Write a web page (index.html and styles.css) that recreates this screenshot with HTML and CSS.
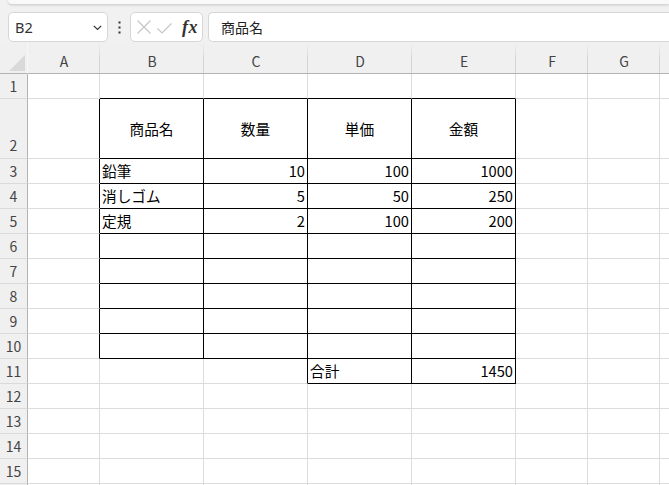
FILE: index.html
```html
<!DOCTYPE html>
<html lang="ja">
<head>
<meta charset="utf-8">
<title>Sheet</title>
<link rel="stylesheet" href="styles.css">
</head>
<body>
<div class="bar">
  <div class="ribbon"></div>
  <div class="fbar">
    <div class="box namebox">
      <span class="ref">B2</span>
      <svg class="chev" width="9" height="6" viewBox="0 0 9 6"><path d="M0.8 0.8 L4.5 4.5 L8.2 0.8" fill="none" stroke="#333" stroke-width="1.2"/></svg>
    </div>
    <div class="dots">
      <svg width="3" height="13" viewBox="0 0 3 13"><rect x="0.5" y="0.5" width="2" height="2" fill="#333"/><rect x="0.5" y="5.5" width="2" height="2" fill="#333"/><rect x="0.5" y="10.5" width="2" height="2" fill="#333"/></svg>
    </div>
    <div class="box fxbox">
      <svg class="ico" width="14" height="14" viewBox="0 0 14 14"><path d="M0.5 0.5 L13.5 13.5 M13.5 0.5 L0.5 13.5" stroke="#c4c4c4" stroke-width="1.1" fill="none"/></svg>
      <svg class="ico chk" width="15" height="11" viewBox="0 0 15 11"><path d="M0.5 5.5 L5 10 L14.5 0.5" stroke="#c4c4c4" stroke-width="1.1" fill="none"/></svg>
      <span class="fx">fx</span>
    </div>
    <div class="box formula">商品名</div>
  </div>
</div>

<div class="sheet">
  <div class="corner"><div class="tri"></div></div>
  <div class="ch">A</div><div class="ch">B</div><div class="ch">C</div><div class="ch">D</div><div class="ch">E</div><div class="ch">F</div><div class="ch">G</div><div class="ch"></div>

  <div class="rh">1</div>
  <div class="c"></div><div class="c kb"></div><div class="c kb"></div><div class="c kb"></div><div class="c kb"></div><div class="c"></div><div class="c"></div><div class="c"></div>

  <div class="rh tall">2</div>
  <div class="c kr"></div><div class="c k m">商品名</div><div class="c k m">数量</div><div class="c k m">単価</div><div class="c k m">金額</div><div class="c"></div><div class="c"></div><div class="c"></div>

  <div class="rh">3</div>
  <div class="c kr"></div><div class="c k">鉛筆</div><div class="c k r">10</div><div class="c k r">100</div><div class="c k r">1000</div><div class="c"></div><div class="c"></div><div class="c"></div>

  <div class="rh">4</div>
  <div class="c kr"></div><div class="c k">消しゴム</div><div class="c k r">5</div><div class="c k r">50</div><div class="c k r">250</div><div class="c"></div><div class="c"></div><div class="c"></div>

  <div class="rh">5</div>
  <div class="c kr"></div><div class="c k">定規</div><div class="c k r">2</div><div class="c k r">100</div><div class="c k r">200</div><div class="c"></div><div class="c"></div><div class="c"></div>

  <div class="rh">6</div>
  <div class="c kr"></div><div class="c k"></div><div class="c k"></div><div class="c k"></div><div class="c k"></div><div class="c"></div><div class="c"></div><div class="c"></div>

  <div class="rh">7</div>
  <div class="c kr"></div><div class="c k"></div><div class="c k"></div><div class="c k"></div><div class="c k"></div><div class="c"></div><div class="c"></div><div class="c"></div>

  <div class="rh">8</div>
  <div class="c kr"></div><div class="c k"></div><div class="c k"></div><div class="c k"></div><div class="c k"></div><div class="c"></div><div class="c"></div><div class="c"></div>

  <div class="rh">9</div>
  <div class="c kr"></div><div class="c k"></div><div class="c k"></div><div class="c k"></div><div class="c k"></div><div class="c"></div><div class="c"></div><div class="c"></div>

  <div class="rh">10</div>
  <div class="c kr"></div><div class="c k"></div><div class="c k"></div><div class="c k"></div><div class="c k"></div><div class="c"></div><div class="c"></div><div class="c"></div>

  <div class="rh">11</div>
  <div class="c"></div><div class="c"></div><div class="c kr"></div><div class="c k">合計</div><div class="c k r">1450</div><div class="c"></div><div class="c"></div><div class="c"></div>

  <div class="rh">12</div>
  <div class="c"></div><div class="c"></div><div class="c"></div><div class="c"></div><div class="c"></div><div class="c"></div><div class="c"></div><div class="c"></div>

  <div class="rh">13</div>
  <div class="c"></div><div class="c"></div><div class="c"></div><div class="c"></div><div class="c"></div><div class="c"></div><div class="c"></div><div class="c"></div>

  <div class="rh">14</div>
  <div class="c"></div><div class="c"></div><div class="c"></div><div class="c"></div><div class="c"></div><div class="c"></div><div class="c"></div><div class="c"></div>

  <div class="rh">15</div>
  <div class="c"></div><div class="c"></div><div class="c"></div><div class="c"></div><div class="c"></div><div class="c"></div><div class="c"></div><div class="c"></div>

  <div class="rh"></div>
  <div class="c"></div><div class="c"></div><div class="c"></div><div class="c"></div><div class="c"></div><div class="c"></div><div class="c"></div><div class="c"></div>
</div>
</body>
</html>
```

FILE: styles.css
```css
html, body {
  margin: 0;
  padding: 0;
}
body {
  width: 669px;
  height: 485px;
  overflow: hidden;
  background: #fff;
  font-family: "Noto Sans CJK JP", "Noto Sans", sans-serif;
}

/* ---- formula bar ---- */
.bar {
  height: 42px;
  background: #f1f1f1;
  overflow: hidden;
}
.ribbon {
  height: 4px;
  margin-left: 8px;
  background: #f9f9f9;
  border-bottom-left-radius: 6px;
  box-shadow: 0 1px 3px rgba(0, 0, 0, 0.18);
}
.fbar {
  display: flex;
  height: 30px;
  margin-top: 8px;
}
.fbar > * {
  flex-shrink: 0;
}
.box {
  box-sizing: border-box;
  background: #fff;
  border: 1px solid #d6d6d6;
  border-radius: 5px;
}
.namebox {
  width: 100px;
  margin-left: 8px;
  display: flex;
  align-items: center;
  justify-content: space-between;
  padding: 0 5px 0 6px;
}
.ref {
  font-family: "Noto Sans", sans-serif;
  font-size: 14.5px;
  color: #333;
  line-height: 20px;
}
.chev {
  margin-top: 1px;
}
.dots {
  width: 22px;
  display: flex;
  align-items: center;
  justify-content: center;
}
.fxbox {
  width: 73px;
  display: flex;
  align-items: center;
  padding-left: 6px;
}
.ico.chk {
  margin-left: 6px;
  margin-top: 2px;
}
.fx {
  margin-left: 10px;
  font-family: "Liberation Serif", serif;
  font-style: italic;
  font-weight: bold;
  font-size: 18px;
  line-height: 20px;
  letter-spacing: 0.5px;
  color: #333;
}
.formula {
  width: 480px;
  margin-left: 5px;
  display: flex;
  align-items: center;
  padding-left: 12px;
  font-size: 14px;
  color: #222;
  border-right: none;
  border-radius: 5px 0 0 5px;
}

/* ---- sheet grid ---- */
.sheet {
  display: grid;
  grid-template-columns: 28px 72px 104px 104px 104px 104px 72px 72px 72px;
  grid-template-rows: 32px 25px 60px repeat(14, 25px);
  width: max-content;
}
.corner,
.ch,
.rh,
.c {
  box-sizing: border-box;
  display: flex;
  align-items: center;
  white-space: nowrap;
  overflow: hidden;
}
.corner {
  position: relative;
  background: #f0f0f0;
  border-bottom: 1px solid #b3b3b3;
  border-right: 1px solid #f7f7f7;
  justify-content: flex-end;
  align-items: flex-end;
  padding: 0 2px 2px 0;
}
.tri {
  width: 16px;
  height: 16px;
  background: #d9d9d9;
  clip-path: polygon(100% 0, 100% 100%, 0 100%);
}
.ch {
  position: relative;
  background: #f0f0f0;
  border-bottom: 1px solid #b3b3b3;
  justify-content: center;
  padding-top: 6px;
  font-size: 14px;
  line-height: 20px;
  color: #444;
}
.ch::after,
.corner::after {
  content: "";
  position: absolute;
  right: 0;
  top: 0;
  bottom: 0;
  width: 1px;
  background: linear-gradient(rgba(212, 212, 212, 0), #d4d4d4 55%);
}
.corner::after {
  right: -1px;
  background: linear-gradient(rgba(180, 180, 180, 0), #b3b3b3 60%);
}
.rh {
  background: #f0f0f0;
  border-right: 1px solid #b3b3b3;
  border-bottom: 1px solid #dadada;
  justify-content: center;
  font-size: 14px;
  line-height: 20px;
  color: #444;
}
.rh.tall {
  align-items: flex-end;
  padding-bottom: 3px;
}
.c {
  border-right: 1px solid #dcdcdc;
  border-bottom: 1px solid #dcdcdc;
  padding: 0 2px;
  font-size: 14.67px;
  line-height: 20px;
  color: #000;
}
.r {
  justify-content: flex-end;
}
.m {
  justify-content: center;
}
.k {
  border-right-color: #000;
  border-bottom-color: #000;
}
.kr {
  border-right-color: #000;
}
.kb {
  border-bottom-color: #000;
}
```
